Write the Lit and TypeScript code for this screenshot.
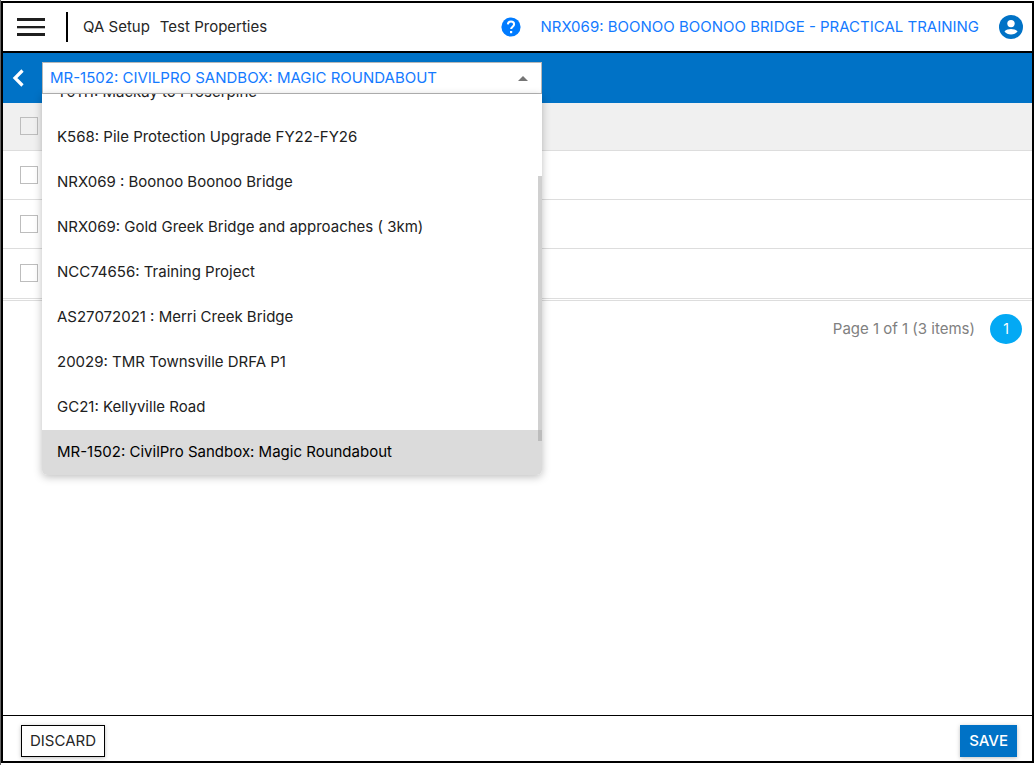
import { LitElement, html, css } from "lit";
import { customElement, state } from "lit/decorators.js";
import { classMap } from "lit/directives/class-map.js";

const PROJECTS = [
  "T0111: Mackay to Proserpine",
  "K568: Pile Protection Upgrade FY22-FY26",
  "NRX069 : Boonoo Boonoo Bridge",
  "NRX069: Gold Greek Bridge and approaches ( 3km)",
  "NCC74656: Training Project",
  "AS27072021 : Merri Creek Bridge",
  "20029: TMR Townsville DRFA P1",
  "GC21: Kellyville Road",
  "MR-1502: CivilPro Sandbox: Magic Roundabout",
];

@customElement("project-picker")
export class ProjectPicker extends LitElement {
  @state() private selected = PROJECTS.length - 1;
  @state() private open = true;

  static styles = css`
    * { box-sizing: border-box; }
    :host {
      display: block;
      position: relative;
      flex: 0 1 500px;
      min-width: 0;
    }
    .field {
      display: flex;
      height: 32px;
      background: #fff;
      border: 1px solid #b8b8b8;
    }
    .value {
      flex: 1;
      min-width: 0;
      padding: 0 7px;
      border: 0;
      outline: 0;
      background: none;
      font: inherit;
      color: #147aff;
      text-transform: uppercase;
    }
    .toggle {
      display: grid;
      place-items: center;
      width: 36px;
      padding: 0;
      border: 0;
      background: none;
    }
    .list {
      position: absolute;
      z-index: 2;
      top: 100%;
      left: 0;
      right: 0;
      display: flex;
      flex-direction: column;
      justify-content: flex-end;
      height: 381px;
      margin: 0;
      padding: 0;
      overflow: hidden;
      list-style: none;
      background: #fff;
      border-radius: 0 0 5px 5px;
      box-shadow: 0 2px 8px rgba(0, 0, 0, 0.26);
    }
    .option {
      flex: none;
      height: 45px;
      padding: 0 15px;
      line-height: 44px;
      white-space: nowrap;
      color: #212121;
    }
    .current { background: #dbdbdb; color: #000; }
    .thumb {
      position: absolute;
      top: 82px;
      right: 0;
      width: 4px;
      height: 265px;
      background: rgba(150, 150, 150, 0.45);
    }
  `;

  render() {
    return html`
      <div class="field">
        <input class="value" type="text" role="combobox" aria-label="Project" readonly
          aria-expanded=${this.open} aria-controls="projects" .value=${PROJECTS[this.selected]} />
        <button class="toggle" aria-label="Toggle project list" @click=${() => (this.open = !this.open)}>
          <svg width="10" height="5" viewBox="0 0 10 5"><path d="M0 5 5 0l5 5z" fill="#757575" /></svg>
        </button>
      </div>
      ${this.open
        ? html`<ul class="list" id="projects" role="listbox" aria-label="Projects">
            ${PROJECTS.map((name, i) => html`<li role="option" aria-selected=${i === this.selected}
              class=${classMap({ option: true, current: i === this.selected })}
              @click=${() => (this.selected = i)}>${name}</li>`)}
            <span class="thumb" aria-hidden="true"></span>
          </ul>`
        : null}
    `;
  }
}

@customElement("app-root")
export class AppRoot extends LitElement {
  static styles = css`
    * { box-sizing: border-box; }
    :host {
      box-sizing: border-box;
      display: flex;
      min-height: 100vh;
      padding: 1px 0 2px;
      border-left: 1px solid #666;
      background: #fff;
      font: 15px/20px Inter, "Open Sans", sans-serif;
      color: #262626;
    }
    button { font: inherit; cursor: pointer; }
    .frame {
      flex: 1;
      min-width: 0;
      display: flex;
      flex-direction: column;
      border: 2px solid #000;
    }
    .top {
      display: flex;
      align-items: center;
      height: 50px;
      padding: 0 9px 0 14px;
      border-bottom: 2px solid #000;
    }
    .icon {
      display: block;
      padding: 0;
      border: 0;
      background: none;
    }
    .icon svg { display: block; }
    .rule {
      width: 2px;
      height: 30px;
      margin: 0 15px 0 21px;
      background: #000;
    }
    .crumbs { display: flex; gap: 10px; }
    .help { margin-left: auto; }
    .project {
      margin: 0 20px 0 19px;
      color: #147aff;
      text-decoration: none;
      text-transform: uppercase;
      white-space: nowrap;
    }
    .bar {
      display: flex;
      align-items: center;
      gap: 18px;
      height: 50px;
      padding: 0 9px;
      background: #0072c6;
    }
    .grid { width: 100%; border-collapse: collapse; }
    .grid th, .grid td {
      height: 49px;
      padding: 0 17px;
      border-bottom: 1px solid #ddd;
      text-align: left;
      vertical-align: middle;
    }
    .grid th { height: 47px; background: #f0f0f0; }
    .grid tr:last-child td { height: 50px; }
    .check {
      display: block;
      appearance: none;
      width: 18px;
      height: 18px;
      margin: 0;
      border: 1px solid #bdbdbd;
      background: transparent;
    }
    .pager {
      display: flex;
      align-items: center;
      justify-content: flex-end;
      gap: 15px;
      margin-top: 1px;
      padding: 13px 10px;
      border-top: 1px solid #ddd;
      color: #808080;
    }
    .page {
      width: 32px;
      height: 30px;
      padding: 0;
      border: 0;
      border-radius: 50%;
      background: #03a9f4;
      color: #fff;
      font-size: 14px;
    }
    .foot {
      display: flex;
      align-items: center;
      justify-content: space-between;
      height: 46px;
      margin-top: auto;
      padding: 4px 15px 0 18px;
      border-top: 1px solid #000;
    }
    .btn {
      height: 32px;
      padding: 0 8px;
      border: 1px solid #000;
      background: #fff;
      color: #262626;
      box-shadow: 0 1px 4px rgba(0, 0, 0, 0.25);
    }
    .save {
      border-color: #0072c6;
      background: #0072c6;
      color: #fff;
      font-weight: 500;
    }
  `;

  private row(label: string) {
    return html`<input class="check" type="checkbox" aria-label=${label} />`;
  }

  render() {
    return html`
      <div class="frame">
        <header class="top">
          <button class="icon" aria-label="Menu">
            <svg width="28" height="18" viewBox="0 0 28 18">
              <path d="M0 0h28v3H0zM0 8h28v2H0zM0 15h28v3H0z" fill="#1f1f1f" />
              <path d="M0 10h28v1H0z" fill="#bbb" />
            </svg>
          </button>
          <span class="rule"></span>
          <nav class="crumbs"><span>QA Setup</span><span>Test Properties</span></nav>
          <button class="icon help" aria-label="Help">
            <svg width="20" height="20" viewBox="0 0 20 20">
              <circle cx="10" cy="10" r="9.6" fill="#007bff" />
              <path d="M6.900 7.400C7 5.500 8.300 4.500 10 4.500s3.100 1.100 3.100 2.700c0 2.400-3 2.500-3 4.900" fill="none" stroke="#fff" stroke-width="2" />
              <path d="M9 14h2.200v2.200H9z" fill="#fff" />
            </svg>
          </button>
          <a class="project" href="#">NRX069: Boonoo Boonoo Bridge - Practical Training</a>
          <button class="icon" aria-label="Account">
            <svg width="24" height="24" viewBox="0 0 24 24">
              <circle cx="12" cy="12" r="12" fill="#0072c6" />
              <circle cx="12" cy="8.600" r="3.700" fill="#fff" />
              <path d="M5.500 16.500c1.300-2 4.300-2.600 6.500-2.600s5.200.6 6.500 2.600c-1.400 1.900-3.800 3-6.500 3s-5.100-1.100-6.500-3z" fill="#fff" />
            </svg>
          </button>
        </header>
        <div class="bar">
          <button class="icon" aria-label="Back">
            <svg width="12" height="18" viewBox="0 0 12 18">
              <path d="M10.500 1.500 3 9l7.500 7.500" fill="none" stroke="#fff" stroke-width="3.200" />
            </svg>
          </button>
          <project-picker></project-picker>
        </div>
        <table class="grid">
          <thead><tr><th>${this.row("Select all")}</th></tr></thead>
          <tbody>
            ${[1, 2, 3].map((n) => html`<tr><td>${this.row(`Select row ${n}`)}</td></tr>`)}
          </tbody>
        </table>
        <div class="pager">
          <span>Page 1 of 1 (3 items)</span>
          <button class="page">1</button>
        </div>
        <footer class="foot">
          <button class="btn">DISCARD</button>
          <button class="btn save">SAVE</button>
        </footer>
      </div>
    `;
  }
}
